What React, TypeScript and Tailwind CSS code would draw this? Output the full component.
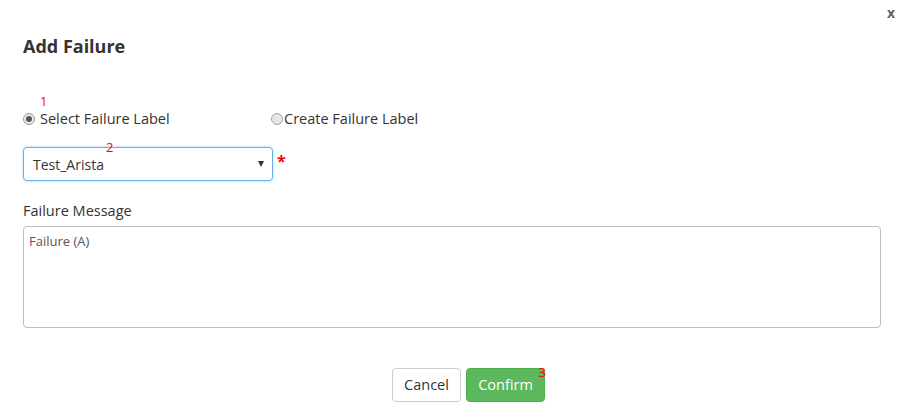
export default function App() {
  return (
    <div className="relative w-[903px] h-[418px] bg-white text-[#333] font-['Open_Sans',sans-serif] overflow-hidden">
      <button className="absolute right-[4px] top-[4px] w-[16px] h-[18px] text-[14px] leading-[18px] font-bold text-[#555] opacity-90">
        x
      </button>

      <div className="px-[23px] pt-[33px]">
        <h4 className="text-[18px] leading-[26px] font-bold text-[#333]">Add Failure</h4>

        <div className="mt-[50px] flex items-end">
          <label className="relative flex items-center w-[248px] text-[14.5px] leading-[20px]">
            <span className="absolute left-[17px] -top-[15px] text-[13px] leading-[14px] text-[#ff0000]">1</span>
            <span className="w-[12px] h-[12px] rounded-full border border-[#9a9a9a] bg-[#eaeaea] flex items-center justify-center mr-[5px]">
              <span className="w-[6px] h-[6px] rounded-full bg-[#555]" />
            </span>
            Select Failure Label
          </label>
          <label className="flex items-center text-[14.5px] leading-[20px]">
            <span className="w-[12px] h-[12px] rounded-full border border-[#a6a6a6] bg-[#e6e6e6] mr-[1px]" />
            Create Failure Label
          </label>
        </div>

        <div className="mt-[18px] flex items-start">
          <div className="relative w-[250px] h-[34px] rounded-[4px] border border-[#66afe9] shadow-[0_0_3px_rgba(102,175,233,0.6)] flex items-center pl-[9px] text-[14px]">
            <span className="absolute left-[82px] -top-[8px] text-[13px] leading-[14px] text-[#ff0000]">2</span>
            Test_Arista
            <span className="absolute right-[8px] top-[13px] w-0 h-0 border-l-[3.5px] border-r-[3.5px] border-t-[6px] border-l-transparent border-r-transparent border-t-[#333]" />
          </div>
          <span className="ml-[4px] mt-[6px] text-[16px] leading-[16px] font-bold text-[#ff0000]">*</span>
        </div>

        <div className="mt-[20px] text-[14.5px] leading-[20px]">Failure Message</div>
        <div className="mt-[5px] w-[858px] h-[102px] rounded-[4px] border border-[#bdbdbd] px-[5px] pt-[6px] text-[13px] leading-[17px] text-[#555]">
          Failure (A)
        </div>

        <div className="mt-[40px] flex justify-center gap-[5px] pl-[34px]">
          <button className="h-[34px] w-[69px] rounded-[4px] border border-[#ccc] bg-white text-[14.5px] text-[#333]">
            Cancel
          </button>
          <button className="relative h-[34px] w-[79px] rounded-[4px] border border-[#4cae4c] bg-[#5cb85c] text-[14.5px] text-white">
            Confirm
            <span className="absolute right-[-2px] -top-[4px] text-[13px] leading-[14px] text-[#ff0000]">3</span>
          </button>
        </div>
      </div>
    </div>
  );
}
